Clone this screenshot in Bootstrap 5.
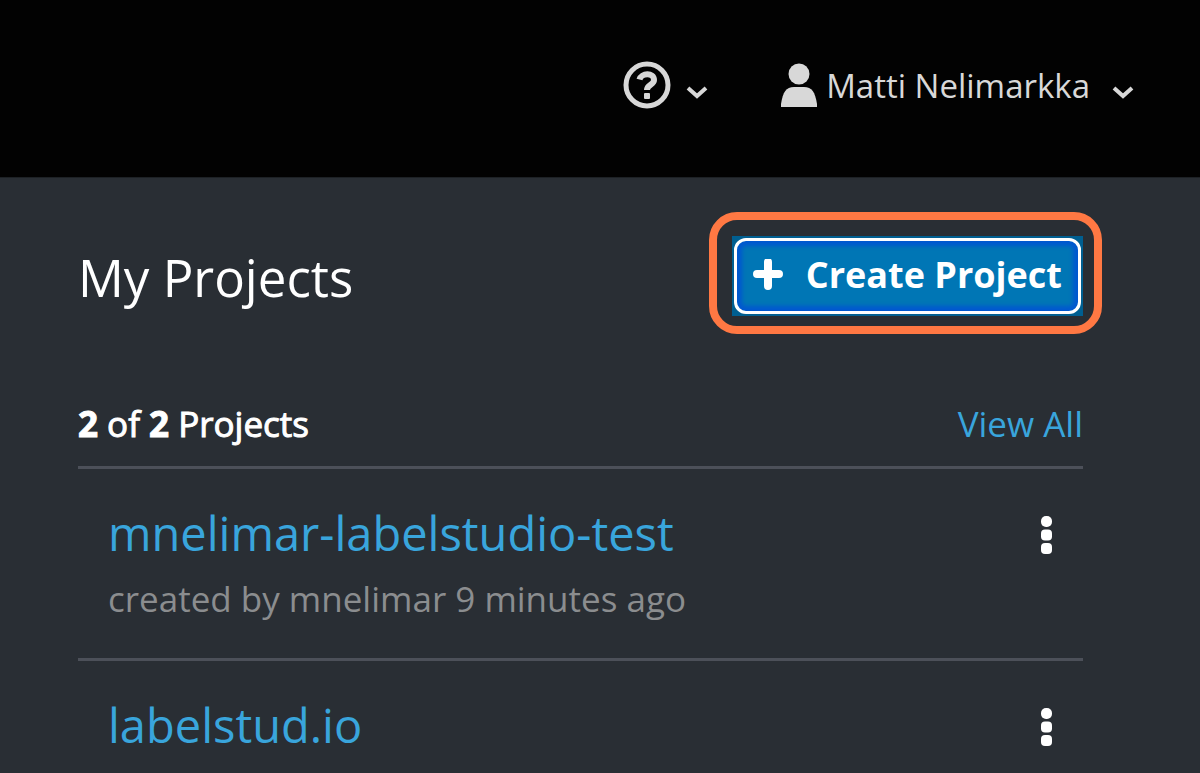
<!DOCTYPE html>
<html lang="en">
<head>
<meta charset="utf-8">
<meta name="viewport" content="width=device-width, initial-scale=1">
<title>My Projects</title>
<link href="https://cdn.jsdelivr.net/npm/bootstrap@5.3.0/dist/css/bootstrap.min.css" rel="stylesheet">
<style>
body{background:#292e34;color:#fff;font-family:"Open Sans",sans-serif;font-size:35px;line-height:48px}
svg{display:block;flex:none}
.topbar{background:#020202;min-height:178px;padding:0 66px 8px 24px;gap:73px;border-bottom:1px solid #1d2125}
.topbar .btn,.topbar .btn:hover{color:#d8d8d8;font-size:33px;line-height:48px}
.help-menu{gap:15px}
.user-name{margin:0 22px 0 9px;padding-top:3px}
.panel{padding:34px 117px 0 78px}
.panel h1{font-size:51px;line-height:64px;font-weight:400;padding-top:33px}
.callout{border:8px solid #ff7843;border-radius:28px;padding:16px 11px 10px 15px;margin-right:-19px}
.btn-frame{background:#005f91;padding:2px}
.btn-create,.btn-create:hover{background:#0076b5;border:3px solid #fff;border-radius:12px;color:#fff;font-size:36px;line-height:48px;font-weight:700;padding:10px 16px 12px 15px;gap:22px;box-shadow:inset 0 0 4px 5px #0058d0}
a,a:hover{color:#39a5dc;text-decoration:none}
.summary{padding:66px 0 18px}
.project-count{-webkit-text-stroke:1px #fff}
.project{border-top:3px solid #4c5059;padding:32px 31px 35px 30px}
.project h2{font-size:47px;line-height:64px;font-weight:400}
.meta{color:#8b8d8f;margin-top:10px}
.kebab,.kebab:hover{color:#fff}
</style>
</head>
<body>
<svg class="d-none" aria-hidden="true"><symbol id="chevron" viewBox="0 0 22 14"><path d="M2 2l9 8 9-8" fill="none" stroke="currentColor" stroke-width="4"/></symbol>
<symbol id="dots" viewBox="0 0 12 42"><g fill="currentColor"><rect x="1" y="4" width="11" height="11" rx="5"/><rect x="1" y="17.500" width="11" height="11" rx="4"/><rect x="1" y="31" width="11" height="11" rx="4"/></g></symbol></svg>
<header class="topbar d-flex justify-content-end align-items-center">
<button type="button" class="btn p-0 border-0 d-flex align-items-center help-menu" aria-label="Help">
<svg width="48" height="48" viewBox="0 0 48 48" fill="none" stroke="currentColor"><circle cx="24" cy="24" r="21" stroke-width="5"/><path d="M16.500 18.500C18 12 31 11 31 19C31 24 24 23.500 24 29" stroke-width="6"/><rect x="21" y="32" width="6" height="6" rx="1" fill="currentColor" stroke="none"/></svg>
<svg class="mt-3" width="22" height="14"><use href="#chevron"/></svg>
</button>
<button type="button" class="btn p-0 border-0 d-flex align-items-center">
<svg width="36" height="44" viewBox="0 0 36 44" fill="currentColor"><circle cx="18" cy="11" r="10.500"/><path d="M0 44V41C2 29 5 24 13 24H23C31 24 34 29 36 41V44Z"/></svg>
<span class="user-name">Matti Nelimarkka</span>
<svg class="mt-3" width="22" height="14"><use href="#chevron"/></svg>
</button>
</header>
<main class="panel">
<div class="d-flex justify-content-between align-items-start"><h1 class="m-0">My Projects</h1>
<div class="callout"><div class="btn-frame"><button type="button" class="btn btn-create d-flex align-items-center"><svg width="32" height="32" viewBox="0 0 32 32" stroke="#fff" stroke-width="8" stroke-linecap="round"><path d="M16 4v24M5 16h22" transform="translate(0 -1)"/></svg>Create Project</button></div></div></div>
<div class="summary d-flex justify-content-between"><div class="project-count"><b>2</b> of <b>2</b> Projects</div><a href="#">View All</a></div>
<section class="project"><div class="d-flex justify-content-between align-items-center"><h2 class="m-0"><a href="#">mnelimar-labelstudio-test</a></h2><button type="button" class="btn p-0 border-0 kebab" aria-label="Project actions"><svg width="12" height="42"><use href="#dots"/></svg></button></div><div class="meta">created by mnelimar 9 minutes ago</div></section>
<section class="project"><div class="d-flex justify-content-between align-items-center"><h2 class="m-0"><a href="#">labelstud.io</a></h2><button type="button" class="btn p-0 border-0 kebab" aria-label="Project actions"><svg width="12" height="42"><use href="#dots"/></svg></button></div></section>
</main>
<script src="https://cdn.jsdelivr.net/npm/bootstrap@5.3.0/dist/js/bootstrap.bundle.min.js"></script>
</body>
</html>
